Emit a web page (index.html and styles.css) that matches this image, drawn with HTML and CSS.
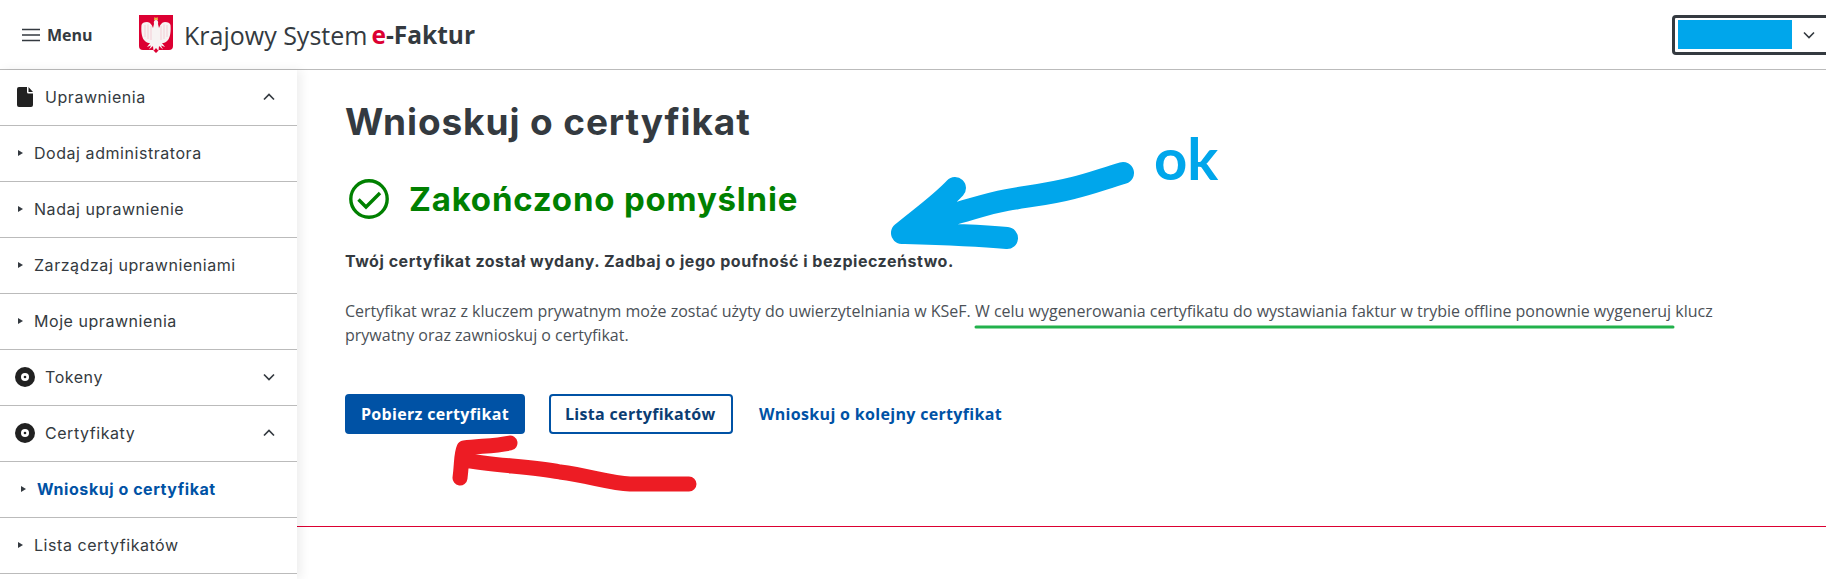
FILE: index.html
```html
<!DOCTYPE html>
<html lang="pl">

<head>
  <meta charset="UTF-8" />
  <meta name="viewport" content="width=device-width, initial-scale=1" />
  <title>Krajowy System e-Faktur</title>
  <link rel="stylesheet" href="styles.css">
</head>

<body>
  <header class="topbar">
    <div class="menu-btn">
      <svg class="menu-icon" viewBox="0 0 18 14" width="18" height="14">
        <path d="M0 1.500h18M0 7h18M0 12.500h18" stroke="#343a40" stroke-width="1.700" fill="none" />
      </svg>
      <span>Menu</span>
    </div>
    <div class="brand">
      <svg class="emblem" viewBox="0 0 34 39" width="34" height="39">
        <defs>
          <g id="wing">
            <path d="M17 5C15 5 14.500 7 15 9L14 13C13 10 11 7 8 7C5 7 3 8 2.500 10C2 15 2.500 22 5 25C7 27.500 9 28 11 28L8 32L12 30.500L10 34.500L14 31L14.500 36L17 33z" fill="#f7f3f3" />
            <path d="M6 10V22M9 9.500V24M12 11V25" stroke="#f3c3cd" stroke-width="0.800" fill="none" />
          </g>
        </defs>
        <path d="M0 0h34v31q0 4-4 4H20l-3 3-3-3H4q-4 0-4-4z" fill="#dc0032" />
        <use href="#wing" />
        <use href="#wing" transform="matrix(-1 0 0 1 34 0)" />
        <path d="M15 5l.5-3 1.500 1 1.500-1 .5 3z" fill="#e8b84a" />
      </svg>
      <span class="brand-name">Krajowy System</span>
      <span class="brand-mark"><em>e</em>-Faktur</span>
    </div>
    <div class="account">
      <div class="account-mask"></div>
      <svg viewBox="0 0 12 8" width="12" height="8">
        <path d="M1 1.500l5 5 5-5" stroke="#343a40" stroke-width="1.600" fill="none" />
      </svg>
    </div>
  </header>

  <div class="layout">
    <nav class="sidebar">
      <div class="nav-row nav-group">
        <svg class="nav-icon" viewBox="0 0 16 20" width="16" height="20">
          <path d="M2 0h8v5q0 1.500 1.500 1.500H16V18q0 2-2 2H2q-2 0-2-2V2q0-2 2-2zM11.500 0L16 5h-4.500z" fill="#212121" />
        </svg>
        <span class="nav-label">Uprawnienia</span>
        <svg class="chev" viewBox="0 0 12 8" width="12" height="8"><path d="M1 6.500l5-5 5 5" /></svg>
      </div>
      <div class="nav-row nav-sub"><i class="tri"></i>Dodaj administratora</div>
      <div class="nav-row nav-sub"><i class="tri"></i>Nadaj uprawnienie</div>
      <div class="nav-row nav-sub"><i class="tri"></i>Zarządzaj uprawnieniami</div>
      <div class="nav-row nav-sub"><i class="tri"></i>Moje uprawnienia</div>
      <div class="nav-row nav-group">
        <svg class="nav-icon disc" viewBox="0 0 20 20" width="20" height="20">
          <circle cx="10" cy="10" r="10" fill="#212121" />
          <circle cx="10" cy="10" r="4" fill="#fff" />
          <circle cx="10" cy="10" r="1.300" fill="#212121" />
        </svg>
        <span class="nav-label">Tokeny</span>
        <svg class="chev" viewBox="0 0 12 8" width="12" height="8"><path d="M1 1.500l5 5 5-5" /></svg>
      </div>
      <div class="nav-row nav-group">
        <svg class="nav-icon disc" viewBox="0 0 20 20" width="20" height="20">
          <circle cx="10" cy="10" r="10" fill="#212121" />
          <circle cx="10" cy="10" r="4" fill="#fff" />
          <circle cx="10" cy="10" r="1.300" fill="#212121" />
        </svg>
        <span class="nav-label">Certyfikaty</span>
        <svg class="chev" viewBox="0 0 12 8" width="12" height="8"><path d="M1 6.500l5-5 5 5" /></svg>
      </div>
      <div class="nav-row nav-sub active"><i class="tri"></i>Wnioskuj o certyfikat</div>
      <div class="nav-row nav-sub"><i class="tri"></i>Lista certyfikatów</div>
    </nav>

    <main class="content">
      <h1>Wnioskuj o certyfikat</h1>
      <div class="status">
        <svg viewBox="0 0 40 40" width="40" height="40">
          <circle cx="20" cy="20" r="18.200" fill="none" stroke="#008000" stroke-width="3.400" />
          <path d="M9.500 20.500l7.500 7.500 14-14" fill="none" stroke="#008000" stroke-width="3.400" />
        </svg>
        <h2>Zakończono pomyślnie</h2>
      </div>
      <p class="lead">Twój certyfikat został wydany. Zadbaj o jego poufność i bezpieczeństwo.</p>
      <p class="info">Certyfikat wraz z kluczem prywatnym może zostać użyty do uwierzytelniania w KSeF. W celu wygenerowania certyfikatu do wystawiania faktur w trybie offline ponownie wygeneruj klucz prywatny oraz zawnioskuj o certyfikat.</p>
      <div class="actions">
        <a class="btn btn-primary">Pobierz certyfikat</a>
        <a class="btn btn-outline">Lista certyfikatów</a>
        <a class="btn-link">Wnioskuj o kolejny certyfikat</a>
      </div>
      <div class="footer-line"></div>
    </main>
  </div>

  <!-- odręczne dopiski na zrzucie -->
  <svg class="scribbles" viewBox="0 0 1826 579" width="1826" height="579">
    <path class="mark-green" d="M976 327H1673" />
    <path class="mark-blue" d="M1123 173C1100 180 1090 184 1073 188C1050 194 1030 196 1007 200C985 204 970 210 950 215C930 222 915 228 902 233M955 188C940 204 920 218 902 233C935 234 970 235 1007 238" />
    <path class="mark-red" d="M510 443C495 446 480 446 464 448C461 455 462 462 460 478M464 460C495 466 530 466 560 472C590 476 610 483 630 484H689" />
  </svg>
  <span class="note-ok">ok</span>
</body>

</html>
```

FILE: styles.css
```css
* {
  margin: 0;
  padding: 0;
  box-sizing: border-box;
}

html,
body {
  height: 579px;
  overflow: hidden;
}

body {
  font-family: 'Open Sans', sans-serif;
  background-color: #fff;
  color: #343a40;
  position: relative;
}

.topbar {
  display: flex;
  align-items: center;
  height: 70px;
  padding-left: 22px;
  border-bottom: 1px solid #bbb;
}

.menu-btn {
  display: flex;
  align-items: center;
  gap: 7px;
  width: 117px;
  font-size: 16px;
  font-weight: 700;
}

.brand {
  display: flex;
  align-items: center;
}

.emblem {
  margin-right: 11px;
}

.brand-name {
  font-size: 25px;
  margin-right: 4px;
}

.brand-mark {
  font-size: 24.500px;
  font-weight: 700;
}

.brand-mark em {
  font-style: normal;
  color: #dc0032;
}

.account {
  display: flex;
  align-items: center;
  gap: 11px;
  width: 170px;
  height: 40px;
  margin-left: auto;
  margin-right: -16px;
  padding-left: 3px;
  border: 3px solid #343a40;
  border-radius: 4px;
}

.account-mask {
  width: 114px;
  height: 29px;
  background-color: #00a6eb;
}

.layout {
  display: flex;
}

.sidebar {
  flex: 0 0 297px;
  height: 509px;
  box-shadow: 4px 0 10px rgba(0, 0, 0, 0.07);
  position: relative;
  font-family: 'Inter', sans-serif;
  letter-spacing: 0.55px;
}

.nav-row {
  display: flex;
  align-items: center;
  height: 56px;
  padding-bottom: 2px;
  border-bottom: 1px solid #bbb;
  font-size: 16px;
  color: #343a40;
}

.nav-group {
  padding-left: 15px;
  padding-right: 22px;
}

.nav-icon {
  margin-left: 2px;
  margin-right: 12px;
}

.nav-icon.disc {
  margin-left: 0;
  margin-right: 10px;
}

.nav-label {
  flex: 1;
}

.chev path {
  fill: none;
  stroke: #343a40;
  stroke-width: 1.700;
}

.nav-sub {
  padding-left: 18px;
}

.tri {
  width: 0;
  height: 0;
  margin-right: 11px;
  border-left: 5px solid #343a40;
  border-top: 3px solid transparent;
  border-bottom: 3px solid transparent;
}

.nav-sub.active {
  padding-left: 21px;
  font-weight: 700;
  color: #0052a5;
}

.content {
  flex: 1;
}

.content h1,
.content .status,
.content .lead,
.content .info,
.content .actions {
  margin-left: 48px;
}

h1 {
  margin-top: 30px;
  font-family: 'Inter', sans-serif;
  font-size: 37px;
  font-weight: 700;
  line-height: 44px;
  letter-spacing: 0.9px;
}

.status {
  display: flex;
  align-items: center;
  gap: 20px;
  margin-top: 35px;
  padding-left: 4px;
}

.status h2 {
  font-family: 'Inter', sans-serif;
  font-size: 33px;
  font-weight: 700;
  color: #008000;
  letter-spacing: 0.8px;
}

.lead {
  margin-top: 30px;
  font-family: 'Inter', sans-serif;
  font-size: 16px;
  font-weight: 700;
  line-height: 24px;
  letter-spacing: 0.53px;
}

.info {
  width: 1430px;
  margin-top: 26px;
  font-size: 16px;
  line-height: 24px;
  color: #4b5157;
}

.actions {
  display: flex;
  align-items: center;
  margin-top: 47px;
  letter-spacing: 0.32px;
}

.btn {
  display: block;
  height: 40px;
  line-height: 36px;
  padding: 0 14px;
  border: 2px solid #0052a5;
  border-radius: 4px;
  font-size: 16px;
  font-weight: 700;
}

.btn-primary {
  width: 180px;
  margin-right: 24px;
  background-color: #0052a5;
  color: #fff;
}

.btn-outline {
  width: 184px;
  margin-right: 26px;
  color: #0b3d73;
}

.btn-link {
  font-size: 16px;
  font-weight: 700;
  color: #0052a5;
}

.footer-line {
  margin-top: 92px;
  border-top: 1px solid #dc0032;
}

.scribbles {
  position: absolute;
  top: 0;
  left: 0;
  pointer-events: none;
}

.scribbles path {
  fill: none;
  stroke-linecap: round;
  stroke-linejoin: round;
}

.mark-green {
  stroke: #22b14c;
  stroke-width: 3;
  stroke-linecap: butt;
}

.mark-blue {
  stroke: #00a6eb;
  stroke-width: 22;
}

.mark-red {
  stroke: #ed1c24;
  stroke-width: 15;
}

.note-ok {
  position: absolute;
  left: 1154px;
  top: 126px;
  font-family: 'Lato', sans-serif;
  font-size: 58px;
  line-height: 64px;
  font-weight: 700;
  color: #00a6eb;
}
```
